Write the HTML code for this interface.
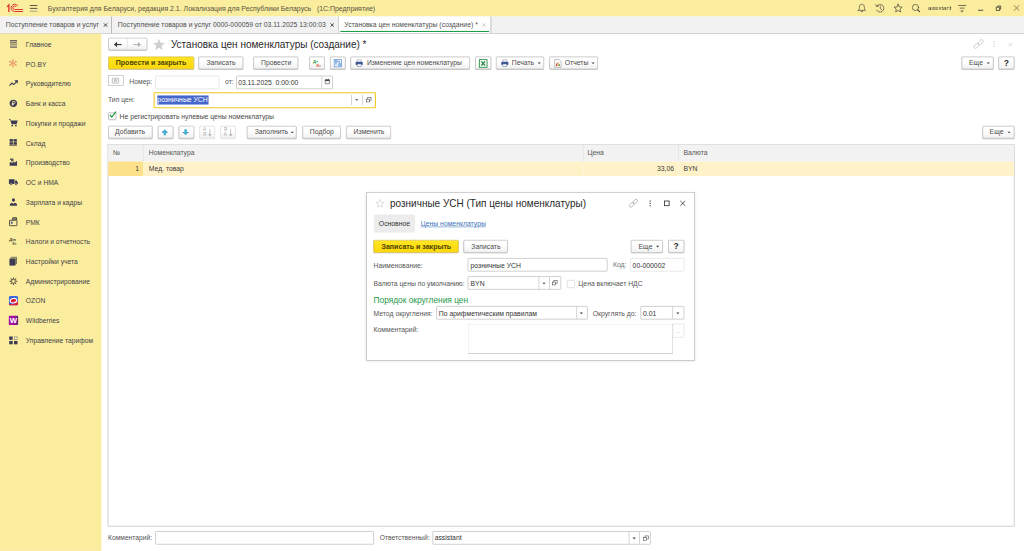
<!DOCTYPE html>
<html lang="ru">
<head>
<meta charset="utf-8">
<title>Установка цен номенклатуры (создание) *</title>
<style>
html,body{margin:0;padding:0;background:#fff;overflow:hidden;width:1024px;height:551px}
#app{position:absolute;left:0;top:0;width:1920px;height:1033px;transform:scale(0.533333);transform-origin:0 0;font-family:"Liberation Sans",sans-serif;font-size:12.8px;color:#3a3a3a;background:#fff;overflow:hidden}
#app *{box-sizing:border-box}
.t{position:absolute;white-space:pre;line-height:16px;height:16px}
svg{position:absolute;overflow:visible}
#topbar{position:absolute;left:0;top:0;width:1920px;height:31px;background:#fbed9e}
#tabbar{position:absolute;left:0;top:31px;width:1920px;height:32px;background:#f2f2f2;border-bottom:1px solid #b4b4b4}
.tab{position:absolute;top:0;height:31px;border-right:1px solid #8c8c8c}
.tab .t{top:8px;color:#4e4e4e}
#side{position:absolute;left:0;top:63px;width:190px;height:970px;background:#fbed9e}
.si{position:absolute;left:0;width:190px;height:37px}
.si span{position:absolute;left:48.5px;top:11.5px;line-height:16px;white-space:pre;color:#3f3f48;font-size:12.6px}
.si svg{left:17px;top:10.5px;width:16px;height:16px}
.btn{position:absolute;height:24px;border:1px solid #a9a9a9;border-radius:2px;background:linear-gradient(#ffffff 40%,#f0f0f0);box-shadow:0 1px 1px rgba(0,0,0,.3),inset 0 0 0 0.5px rgba(0,0,0,.08);white-space:pre;color:#4a4a4a}
.btn .t{top:3.5px}
.btn.def{background:linear-gradient(#ffe521,#fbd80b);border-color:#cfa900;font-weight:bold;color:#4d4200;font-size:13.2px}
.btn.dis{border-color:#d2d2d2;box-shadow:0 1px 1px rgba(0,0,0,.1)}
.btn .q{left:0;width:28px;text-align:center;font-weight:bold;font-size:16px;color:#2a2a2a;top:3px}
.inp{position:absolute;height:25px;border:1px solid #a8a8a8;border-radius:2px;background:#fff;white-space:pre;color:#333}
.inp.lt{border-color:#d6d6d6}
.inp .t{top:4px;left:4px}
.dv{position:absolute;top:0;width:1px;height:100%;background:#b0b0b0}
.lbl{color:#555}
.arr{position:absolute;width:0;height:0;border-left:3px solid transparent;border-right:3px solid transparent;border-top:3.5px solid #3a3a3a}
</style>
</head>
<body>
<div id="app">
<div id="topbar">
<svg style="left:0;top:0;width:80px;height:31px" viewBox="0 0 80 31">
<g fill="none" stroke="#dc2f33" stroke-width="1.8">
<path d="M13.400 12.800 L16.600 9.200 L16.600 22.300" stroke-width="2.500"/>
<path d="M33.600 11.400 A6.900 6.800 0 1 0 27.300 21.600 L43 21.600"/>
<path d="M30.600 13.200 A3.400 3.300 0 1 0 27.300 17.900 L43 17.900"/>
</g>
<g fill="#5a5748"><rect x="56" y="9.4" width="14" height="1.9"/><rect x="56" y="14.8" width="14" height="1.9"/><rect x="56" y="20.1" width="14" height="1.9" fill="#a9a57c"/></g>
</svg>
<div class="t" style="left:89.500px;top:7.500px;color:#56523f;font-size:13.020px">Бухгалтерия для Беларуси, редакция 2.1. Локализация для Республики Беларусь   (1С:Предприятие)</div>
<svg style="left:1600px;top:0;width:320px;height:31px" viewBox="1600 0 320 31">
<g fill="none" stroke="#4a4738" stroke-width="1.350" stroke-linejoin="round" stroke-linecap="round">
<!-- bell -->
<path d="M1609.5 19.5 L1622.5 19.5 C1620.5 17.5 1620.8 15 1620.6 12.8 C1620.3 9.6 1618.5 8 1616 8 C1613.5 8 1611.7 9.6 1611.4 12.8 C1611.2 15 1611.5 17.5 1609.5 19.5 Z"/>
<path d="M1614.3 21.6 Q1616 23.6 1617.7 21.6"/>
<!-- history -->
<path d="M1644.2 11.2 A7.2 7.2 0 1 1 1643.6 18.8"/>
<path d="M1642.2 8.6 L1643.6 12.4 L1647.3 11.3" />
<path d="M1650.5 11.4 L1650.5 15.8 L1653.6 18.4"/>
<!-- star -->
<path d="M1684.0 7.9 L1686.2 12.9 L1691.6 13.4 L1687.5 17.0 L1688.7 22.4 L1684.0 19.6 L1679.3 22.4 L1680.5 17.0 L1676.4 13.4 L1681.8 12.9 Z"/>
<!-- search -->
<circle cx="1716.500" cy="14" r="5.800"/>
<path d="M1720.800 18.400 L1724.300 22" stroke-width="2.100"/>
<!-- settings lines -->
<path d="M1796.500 10.200 L1811.500 10.200 M1799.500 15.200 L1808.500 15.200" stroke-width="1.450" stroke-linecap="butt"/>
<path d="M1801.800 20 L1806.200 20 L1804 22.600 Z" fill="#4a4738" stroke-width="0.6"/>
<!-- min -->
<path d="M1834 19.300 L1843.500 19.300" stroke-width="1.800" stroke-linecap="butt"/>
<!-- restore -->
<path d="M1868.700 13.400 L1874.300 13.400 L1874.300 19.700 L1868.700 19.700 Z M1870.800 13 L1870.800 11.200 L1876.300 11.200 L1876.300 17 L1874.600 17" stroke-width="1.600" stroke-linejoin="miter"/>
<!-- close -->
<path d="M1901.600 10.400 L1910.600 19.600 M1910.600 10.400 L1901.600 19.600" stroke-width="1.350" stroke="#6b5f3a"/>
</g>
</svg>
<div class="t" style="left:1739.500px;top:8px;font-size:11.100px;color:#1e1e1e;line-height:14px;height:14px;will-change:transform">assistant</div>
</div>
<div id="tabbar">
<div class="tab" style="left:0;width:209.500px"><div class="t" style="left:11px">Поступление товаров и услуг</div><svg style="left:194px;top:12px;width:8px;height:8px" viewBox="0 0 8 8"><path d="M0.800 0.800 L7 7 M7 0.800 L0.800 7" stroke="#333" stroke-width="1.700" fill="none"/></svg></div>
<div class="tab" style="left:209.500px;width:425.500px"><div class="t" style="left:11.500px">Поступление товаров и услуг 0000-000059 от 03.11.2025 13:00:03</div><svg style="left:409px;top:12px;width:8px;height:8px" viewBox="0 0 8 8"><path d="M0.800 0.800 L7 7 M7 0.800 L0.800 7" stroke="#333" stroke-width="1.700" fill="none"/></svg></div>
<div class="tab" style="left:635px;width:285.500px;background:#fff;height:31px"><div class="t" style="left:10.500px">Установка цен номенклатуры (создание) *</div><svg style="left:269px;top:12px;width:8px;height:8px" viewBox="0 0 8 8"><path d="M0.500 0.500 L7.300 7.300 M7.300 0.500 L0.500 7.300" stroke="#b5b5b5" stroke-width="1.200" fill="none"/></svg>
<div style="position:absolute;left:3px;top:27px;width:278.500px;height:2px;background:#1e9e4a"></div></div>
</div>
<div id="side">
<div class="si" style="top:1px"><svg viewBox="0 0 16 16"><rect x="1.700" y="0.400" width="13.200" height="2.100" fill="#4a4350"/><rect x="1.700" y="4.300" width="13.200" height="2" fill="#554f52"/><rect x="1.700" y="8.100" width="13.200" height="2" fill="#7d7866"/><rect x="1.700" y="11.800" width="13.200" height="3.200" fill="#8a8570"/></svg><span>Главное</span></div>
<div class="si" style="top:38px"><svg viewBox="0 0 16 16"><g stroke="#de6a48" stroke-width="1.200" fill="none"><path d="M7.300 0.600 L7.300 12.800 M2 3.600 L12.600 9.800 M2 9.800 L12.600 3.600"/></g><g fill="#d8402f"><circle cx="7.300" cy="0.400" r="1"/><circle cx="7.300" cy="13" r="1"/><circle cx="1.600" cy="3.400" r="1.100"/><circle cx="13" cy="10" r="1.100"/><circle cx="1.600" cy="10" r="1.100"/><circle cx="13" cy="3.400" r="1.100"/><circle cx="5" cy="6.700" r="0.900"/><circle cx="9.600" cy="6.700" r="0.900"/></g><circle cx="7.300" cy="6.700" r="1.300" fill="#f3c98a"/></svg><span>PO.BY</span></div>
<div class="si" style="top:75px"><svg viewBox="0 0 16 16"><path d="M0.800 11.500 L5.500 6.800 L8.800 9.600 L13.500 4.800" fill="none" stroke="#3c3a55" stroke-width="2.100"/><path d="M9.800 1.800 L16.500 1.200 L16 8 Z" fill="#3c3a55"/></svg><span>Руководителю</span></div>
<div class="si" style="top:112px"><svg viewBox="0 0 16 16"><circle cx="8.100" cy="7.700" r="6.900" fill="#3c3a55"/><path d="M6.600 12 L6.600 4 L9.300 4 A2.100 2.100 0 0 1 9.300 8.200 L5 8.200 M5 10.200 L9.300 10.200" fill="none" stroke="#f5e6a8" stroke-width="1.500"/></svg><span>Банк и касса</span></div>
<div class="si" style="top:149px"><svg viewBox="0 0 16 16"><path d="M-0.300 0.700 L2.800 0.700 L3.800 3 L16.300 3 L14 9.800 L4.800 9.800 L2.200 2 L-0.300 2 Z" fill="#3c3a55"/><circle cx="5.800" cy="12.400" r="1.600" fill="#3c3a55"/><circle cx="12.800" cy="12.400" r="1.600" fill="#3c3a55"/></svg><span>Покупки и продажи</span></div>
<div class="si" style="top:186px"><svg viewBox="0 0 16 16"><g fill="#3c3a55"><rect x="1" y="0.800" width="6.200" height="4.800"/><rect x="8.400" y="0.800" width="6.200" height="4.800"/><rect x="1" y="6.600" width="6.200" height="4.800"/><rect x="8.400" y="6.600" width="6.200" height="4.800"/></g><rect x="0.300" y="12.500" width="14.800" height="1.300" fill="#5a5650"/></svg><span>Склад</span></div>
<div class="si" style="top:223px"><svg viewBox="0 0 16 16"><path d="M1.200 14 L1.200 7 L5 7 L5 9 L9.500 5.500 L9.500 8.500 L14.900 4.500 L14.900 14 Z" fill="#3c3a55"/><rect x="1.800" y="0.400" width="6.400" height="2.300" fill="#3c3a55"/><rect x="3.800" y="3.200" width="4.200" height="2.200" fill="#3c3a55"/></svg><span>Производство</span></div>
<div class="si" style="top:260px"><svg viewBox="0 0 16 16"><path d="M-0.300 2.200 L10.300 2.200 L10.300 11 L-0.300 11 Z M11.300 4.500 L14 4.500 L16.500 8 L16.500 11 L11.300 11 Z" fill="#3c3a55"/><circle cx="3.800" cy="11.300" r="1.900" fill="#3c3a55" stroke="#fbed9e" stroke-width="0.700"/><circle cx="13" cy="11.300" r="1.900" fill="#3c3a55" stroke="#fbed9e" stroke-width="0.700"/></svg><span>ОС и НМА</span></div>
<div class="si" style="top:297px"><svg viewBox="0 0 16 16"><ellipse cx="8.200" cy="4" rx="2.900" ry="3.300" fill="#3c3a55"/><path d="M1.600 14.800 L1.600 13 Q1.600 10 5.500 9.200 L8.200 11 L11 9.200 Q14.900 10 14.900 13 L14.900 14.800 Z" fill="#3c3a55"/></svg><span>Зарплата и кадры</span></div>
<div class="si" style="top:334px"><svg viewBox="0 0 16 16"><g fill="none" stroke="#4a4538" stroke-width="1.700"><rect x="0.900" y="5" width="13.800" height="10.200" rx="0.500"/><path d="M6.800 4.500 L6.800 0.200 L14 0.200 L14 4.500"/></g><rect x="7" y="1.500" width="7" height="2.300" fill="#3c3a55"/><rect x="3.300" y="7.500" width="3.600" height="4" fill="#54609a"/></svg><span>РМК</span></div>
<div class="si" style="top:371px"><svg viewBox="0 0 16 16"><text x="0.300" y="7" font-size="7.800" font-weight="bold" font-style="italic" fill="#4a4538" font-family="Liberation Sans,sans-serif">Дт</text><text x="6.300" y="14" font-size="6.800" font-weight="bold" fill="#4a4538" font-family="Liberation Sans,sans-serif">Кт</text></svg><span>Налоги и отчетность</span></div>
<div class="si" style="top:408px"><svg viewBox="0 0 16 16"><path d="M0.700 3.500 L4 -0.500 L14.700 -0.500 L11.500 3.500 Z" fill="#8f8a6c"/><path d="M11.500 3.500 L14.700 -0.500 L14.700 12 L11.500 16 Z" fill="#6f6b5c"/><rect x="0.700" y="3.500" width="10.800" height="12.500" fill="#3c3a55"/></svg><span>Настройки учета</span></div>
<div class="si" style="top:445px"><svg viewBox="0 0 16 16"><circle cx="8.150" cy="8.350" r="3.700" fill="none" stroke="#4a4538" stroke-width="1.600"/><g stroke="#4a4538" stroke-width="1.900"><path d="M8.150 1.100 L8.150 4 M8.150 12.700 L8.150 15.600 M0.900 8.350 L3.800 8.350 M12.500 8.350 L15.400 8.350 M3 3.200 L5.050 5.250 M11.250 11.450 L13.300 13.500 M13.300 3.200 L11.250 5.250 M5.050 11.450 L3 13.500"/></g></svg><span>Администрирование</span></div>
<div class="si" style="top:482px"><svg viewBox="0 0 16 16"><clipPath id="oz"><rect x="-0.500" y="-1.200" width="17.500" height="18" rx="3.500"/></clipPath><g clip-path="url(#oz)"><rect x="-0.500" y="-1.200" width="17.500" height="18" fill="#3561dd"/><path d="M-0.500 13 Q9 17 17 8.500 L17 17 L-0.500 17 Z" fill="#e0203a"/></g><ellipse cx="8.300" cy="7.800" rx="6.300" ry="4.100" fill="#df1f38" stroke="#fff" stroke-width="2" transform="rotate(-12 8.300 7.800)"/></svg><span>OZON</span></div>
<div class="si" style="top:519px"><svg viewBox="0 0 16 16"><linearGradient id="wbg" x1="0" x2="1" y1="0" y2="0"><stop offset="0.650" stop-color="#a3109f"/><stop offset="1" stop-color="#4a2a78"/></linearGradient><rect x="-0.500" y="-0.800" width="17.500" height="17.200" rx="1.500" fill="url(#wbg)"/><text x="8.300" y="13" font-size="14.500" font-weight="bold" fill="#fff" text-anchor="middle" font-family="Liberation Sans,sans-serif">W</text></svg><span>Wildberries</span></div>
<div class="si" style="top:556px"><svg viewBox="0 0 16 16"><g fill="#3c3a55"><rect x="0.300" y="0.900" width="6.500" height="6.300"/><rect x="0.300" y="9.300" width="6.500" height="6.300"/><rect x="9.300" y="9.300" width="6.500" height="6.300"/></g><rect x="10" y="1.600" width="5.100" height="4.900" fill="#fdf6cf" stroke="#8c8770" stroke-width="1.300"/></svg><span>Управление тарифом</span></div>
</div>
<div id="main">
<!-- nav -->
<div class="btn" style="left:202.800px;top:71.400px;width:72.800px;height:22.900px;box-shadow:0 1px 1px rgba(0,0,0,.3)"><div class="dv" style="left:33.800px;background:#d4d4d4"></div>
<svg style="left:9.500px;top:5.300px;width:16px;height:11px" viewBox="0 0 16 11"><path d="M15 5.500 L3 5.500" stroke="#3a3a3a" stroke-width="2.200" fill="none"/><path d="M0.500 5.500 L6.500 0.500 L6.500 10.500 Z" fill="#3a3a3a"/></svg>
<svg style="left:45px;top:5.300px;width:16px;height:11px" viewBox="0 0 16 11"><path d="M1 5.500 L13 5.500" stroke="#b4b4b4" stroke-width="2" fill="none"/><path d="M15.500 5.500 L9.500 0.500 L9.500 10.500 Z" fill="#b4b4b4"/></svg>
</div>
<svg style="left:286px;top:71.500px;width:24px;height:22.500px" viewBox="0 0 23 21"><path d="M11.500 0.500 L14.400 7.600 L22.300 8.100 L16.200 13.100 L18.200 20.600 L11.500 16.500 L4.800 20.600 L6.800 13.100 L0.700 8.100 L8.600 7.600 Z" fill="#cfcfcf"/></svg>
<div class="t" style="left:320.500px;top:71.500px;font-size:18.740px;line-height:24px;height:24px;color:#2a2a2a">Установка цен номенклатуры (создание) *</div>
<!-- header right icons -->
<svg style="left:1824px;top:73px;width:22px;height:20px" viewBox="1824 73 22 20"><g fill="none" stroke="#c2c2c2" stroke-width="1.400"><rect x="1825.500" y="83" width="10.500" height="6" rx="3" transform="rotate(-42 1830.750 86)"/><rect x="1833.500" y="76" width="10.500" height="6" rx="3" transform="rotate(-42 1838.750 79)"/></g></svg>
<svg style="left:1860px;top:75px;width:8px;height:16px" viewBox="0 0 8 16"><g fill="#c4c4c4"><rect x="3" y="2.200" width="2" height="2"/><rect x="3" y="6.500" width="2" height="2"/><rect x="3" y="10.800" width="2" height="2"/></g></svg>
<svg style="left:1891px;top:79.500px;width:7px;height:7px" viewBox="0 0 8 8"><path d="M0.500 0.500 L7.500 7.500 M7.500 0.500 L0.500 7.500" stroke="#c4c4c4" stroke-width="1.300" fill="none"/></svg>
<!-- command bar -->
<div class="btn def" style="left:203px;top:105.500px;width:160.500px"><div class="t" style="left:13px">Провести и закрыть</div></div>
<div class="btn" style="left:372px;top:105.500px;width:83.500px"><div class="t" style="left:14px">Записать</div></div>
<div class="btn" style="left:475px;top:105.500px;width:84px"><div class="t" style="left:13.500px">Провести</div></div>
<div class="btn" style="left:579.500px;top:105.500px;width:29.500px">
<div class="t" style="left:6.500px;top:4.500px;font-size:7.800px;font-weight:bold;color:#2c9a3e;line-height:9px;height:9px">Дт</div>
<div class="t" style="left:13px;top:12px;font-size:7.500px;font-weight:bold;color:#e0452c;line-height:9px;height:9px">Кт</div></div>
<div class="btn" style="left:618.500px;top:105.500px;width:29.500px"><svg style="left:6.500px;top:4px;width:15px;height:15px" viewBox="0 0 15 15"><rect x="0.600" y="0.600" width="13.800" height="13.800" fill="#e9f1fb" stroke="#5b90d4" stroke-width="1.300"/><rect x="1.500" y="1.500" width="5" height="5.500" fill="#8db4e6"/><rect x="8" y="7.500" width="5.500" height="6" fill="#8db4e6"/><rect x="2" y="9" width="4" height="3.500" fill="#fff"/><path d="M6.500 4 L10.500 4 L10.500 7.500 M4 7 L4 11" stroke="#3f78c6" stroke-width="1.200" fill="none"/></svg></div>
<div class="btn" style="left:657px;top:105.500px;width:224px"><svg class="prn" style="left:8px;top:4.500px;width:15px;height:15px" viewBox="0 0 15 15"><path d="M3.800 5 L3.800 1.200 L11.200 1.200 L11.200 5" fill="#fff" stroke="#8e96ab" stroke-width="1.100"/><rect x="0.800" y="5" width="13.400" height="6" rx="1.500" fill="#3b5590"/><rect x="3.800" y="9" width="7.400" height="4.800" fill="#fff" stroke="#5a6a92" stroke-width="1"/></svg><div class="t" style="left:30px;font-size:12.600px">Изменение цен номенклатуры</div></div>
<div class="btn" style="left:891px;top:105.500px;width:29.500px"><svg style="left:6px;top:4px;width:16px;height:16px" viewBox="0 0 16 16"><rect x="0.800" y="0.800" width="14.400" height="14.400" fill="#fff" stroke="#1f8a43" stroke-width="1.600"/><rect x="3" y="3" width="10" height="10" fill="#e4f3e8"/><path d="M4.500 4 L11.500 12 M11.500 4 L4.500 12" stroke="#1f7a3a" stroke-width="2" fill="none"/></svg></div>
<div class="btn" style="left:930px;top:105.500px;width:90px"><svg style="left:8px;top:4.500px;width:15px;height:15px" viewBox="0 0 15 15"><path d="M3.800 5 L3.800 1.200 L11.200 1.200 L11.200 5" fill="#fff" stroke="#8e96ab" stroke-width="1.100"/><rect x="0.800" y="5" width="13.400" height="6" rx="1.500" fill="#3b5590"/><rect x="3.800" y="9" width="7.400" height="4.800" fill="#fff" stroke="#5a6a92" stroke-width="1"/></svg><div class="t" style="left:28.500px">Печать</div><div class="arr" style="left:76.500px;top:10.800px"></div></div>
<div class="btn" style="left:1029.500px;top:105.500px;width:91.500px"><svg style="left:8px;top:4px;width:14px;height:16px" viewBox="0 0 14 16"><path d="M1 0.700 L9.500 0.700 L13 4.200 L13 15.300 L1 15.300 Z" fill="#fff" stroke="#9a9a9a" stroke-width="1.200"/><rect x="3.500" y="8" width="2" height="5" fill="#d23c2c"/><rect x="6.300" y="5.500" width="2" height="7.500" fill="#e0812c"/><rect x="9" y="9.500" width="1.800" height="3.500" fill="#3a9a3e"/></svg><div class="t" style="left:28.500px">Отчеты</div><div class="arr" style="left:78px;top:10.800px"></div></div>
<div class="btn" style="left:1802.500px;top:105.500px;width:60.500px"><div class="t" style="left:13.500px">Еще</div><div class="arr" style="left:46.500px;top:10.800px"></div></div>
<div class="btn" style="left:1872px;top:105.500px;width:30px"><div class="t q">?</div></div>
<!-- number row -->
<div style="position:absolute;left:202.500px;top:141px;width:29.500px;height:20px;border:1px solid #a9a9a9;background:#fff"><svg style="left:6.300px;top:3.800px;width:13px;height:10.500px" viewBox="0 0 13 10.500"><rect x="0.600" y="0.600" width="11.800" height="9.300" rx="1" fill="#f6f6f6" stroke="#a2a2a2" stroke-width="1.200"/><rect x="3.800" y="2.300" width="5.400" height="5.600" fill="#c9c9c9"/></svg></div>
<div class="t lbl" style="left:242.500px;top:145.500px">Номер:</div>
<div class="inp lt" style="left:291px;top:141.500px;width:119.500px"></div>
<div class="t lbl" style="left:422px;top:145.500px">от:</div>
<div class="inp" style="left:442.500px;top:141.500px;width:181.500px"><div class="t" style="left:3px">03.11.2025  0:00:00</div><div class="dv" style="left:159.500px"></div>
<svg style="left:165px;top:5.500px;width:9.500px;height:9.500px" viewBox="0 0 11 11"><rect x="0.700" y="1.700" width="9.600" height="8.600" rx="1" fill="#fff" stroke="#444" stroke-width="1.300"/><rect x="0.700" y="1.700" width="9.600" height="3" fill="#444"/><rect x="2.500" y="0" width="1.500" height="2.500" fill="#444"/><rect x="7" y="0" width="1.500" height="2.500" fill="#444"/></svg></div>
<!-- price type row -->
<div class="t lbl" style="left:202.500px;top:180px">Тип цен:</div>
<div class="inp" style="left:288px;top:172.500px;width:417px;height:30.500px;border:2.500px solid #f6c822;border-radius:1.500px">
<div style="position:absolute;left:5px;top:4.500px;width:95.500px;height:16.500px;background:#4566cb"></div>
<div class="t" style="left:5px;top:4.500px;color:#fff">розничные УСН</div>
<div class="dv" style="left:368.500px;top:3px;height:19.500px"></div><div class="dv" style="left:389px;top:3px;height:19.500px"></div>
<div class="arr" style="left:375.500px;top:11px"></div>
<svg style="left:395.500px;top:7px;width:10.500px;height:10.500px" viewBox="0 0 12 12"><g fill="#fff" stroke="#444" stroke-width="1.200"><rect x="4" y="1" width="7" height="6.500"/><rect x="1" y="4.500" width="6.500" height="6"/></g></svg>
</div>
<!-- checkbox -->
<div style="position:absolute;left:203px;top:211px;width:14.500px;height:14px;border:1px solid #8c8c8c;border-radius:2px;background:#fff"></div>
<svg style="left:204px;top:207px;width:16px;height:16px" viewBox="0 0 16 16"><path d="M2 8.500 L5.500 12.500 L13.500 2.500" fill="none" stroke="#1c9440" stroke-width="2.300"/></svg>
<div class="t" style="left:224.200px;top:210.500px;font-size:12.750px;color:#484848">Не регистрировать нулевые цены номенклатуры</div>
<!-- table cmd bar -->
<div class="btn" style="left:203px;top:235.500px;width:82.500px"><div class="t" style="left:11.500px">Добавить</div></div>
<div class="btn" style="left:295.500px;top:235.500px;width:29px"><svg style="left:6.800px;top:5.500px;width:12px;height:12px" viewBox="0 0 14 14"><path d="M7 0.300 L13.700 7.500 L9.600 7.500 L9.600 13.700 L4.400 13.700 L4.400 7.500 L0.300 7.500 Z" fill="#3fb0cb"/><path d="M0.300 7.500 L2.600 5 L3.600 7.500 Z M13.700 7.500 L11.400 5 L10.400 7.500 Z" fill="#3f5fd0"/></svg></div>
<div class="btn" style="left:334.500px;top:235.500px;width:29px"><svg style="left:6.800px;top:5.500px;width:12px;height:12px" viewBox="0 0 14 14"><path d="M7 13.700 L13.700 6.500 L9.600 6.500 L9.600 0.300 L4.400 0.300 L4.400 6.500 L0.300 6.500 Z" fill="#3fb0cb"/><path d="M0.300 6.500 L2.600 9 L3.600 6.500 Z M13.700 6.500 L11.400 9 L10.400 6.500 Z" fill="#3f5fd0"/></svg></div>
<div class="btn dis" style="left:373.500px;top:235.500px;width:29.500px"><div class="t" style="left:6px;top:2.500px;font-size:8.500px;line-height:8px;height:8px;color:#a6a6a6">А</div><div class="t" style="left:6px;top:11.500px;font-size:8.500px;line-height:8px;height:8px;color:#a6a6a6">Я</div><svg style="left:14px;top:4px;width:9px;height:16px" viewBox="0 0 9 16"><path d="M4.500 1 L4.500 13" stroke="#b0b0b0" stroke-width="1.400"/><path d="M1 10.500 L4.500 15 L8 10.500 Z" fill="#b0b0b0"/></svg></div>
<div class="btn dis" style="left:412.500px;top:235.500px;width:29.500px"><div class="t" style="left:6px;top:2.500px;font-size:8.500px;line-height:8px;height:8px;color:#a6a6a6">Я</div><div class="t" style="left:6px;top:11.500px;font-size:8.500px;line-height:8px;height:8px;color:#a6a6a6">А</div><svg style="left:14px;top:4px;width:9px;height:16px" viewBox="0 0 9 16"><path d="M4.500 1 L4.500 13" stroke="#b0b0b0" stroke-width="1.400"/><path d="M1 10.500 L4.500 15 L8 10.500 Z" fill="#b0b0b0"/></svg></div>
<div class="btn" style="left:462.500px;top:235.500px;width:93.500px"><div class="t" style="left:14px">Заполнить</div><div class="arr" style="left:81.500px;top:10.800px"></div></div>
<div class="btn" style="left:566.500px;top:235.500px;width:72px"><div class="t" style="left:13.500px">Подбор</div></div>
<div class="btn" style="left:648.500px;top:235.500px;width:84.500px"><div class="t" style="left:13.500px">Изменить</div></div>
<div class="btn" style="left:1841.500px;top:235.500px;width:60.500px"><div class="t" style="left:13px">Еще</div><div class="arr" style="left:46.500px;top:10.800px"></div></div>
<!-- table -->
<div style="position:absolute;left:202.400px;top:270.300px;width:1700px;height:716.600px;border:1px solid #a8a8a8;background:#fff">
<div style="position:absolute;left:0;top:0;width:100%;height:32px;background:#f2f2f2"></div>
<div class="dv" style="left:64.500px;height:32px;background:#dcdcdc"></div><div class="dv" style="left:889.700px;height:32px;background:#dcdcdc"></div><div class="dv" style="left:1068.200px;height:32px;background:#dcdcdc"></div>
<div class="t lbl" style="left:8.500px;top:7.500px">№</div><div class="t lbl" style="left:75.500px;top:7.500px">Номенклатура</div><div class="t lbl" style="left:898px;top:7.500px">Цена</div><div class="t lbl" style="left:1078px;top:7.500px">Валюта</div>
<div style="position:absolute;left:0;top:32px;width:100%;height:26.500px;background:#fff2c9"></div>
<div style="position:absolute;left:0;top:32px;width:64.500px;height:26.500px;background:#fde18a"></div>
<div style="position:absolute;left:889.700px;top:32px;width:0;height:26.500px;border-left:1px dashed #fff"></div><div style="position:absolute;left:1068.200px;top:32px;width:0;height:26.500px;border-left:1px dashed #fff"></div>
<div class="t" style="left:0;top:37px;width:57.500px;text-align:right">1</div><div class="t" style="left:75.500px;top:37px">Мед. товар</div><div class="t" style="left:960px;top:37px;width:100.500px;text-align:right">33,06</div><div class="t" style="left:1078px;top:37px">BYN</div>
</div>
<!-- footer -->
<div class="t lbl" style="left:202.500px;top:1001px;font-size:12.600px">Комментарий:</div>
<div class="inp" style="left:291px;top:996px;width:409.500px"></div>
<div class="t lbl" style="left:712px;top:1000.500px;font-size:12.600px">Ответственный:</div>
<div class="inp" style="left:810.500px;top:996px;width:409.500px"><div class="t" style="left:3.500px">assistant</div><div class="dv" style="left:367px"></div><div class="dv" style="left:387.500px"></div><div class="arr" style="left:374.500px;top:10.500px"></div>
<svg style="left:394.500px;top:6.500px;width:10.500px;height:10.500px" viewBox="0 0 12 12"><g fill="#fff" stroke="#444" stroke-width="1.200"><rect x="4" y="1" width="7" height="6.500"/><rect x="1" y="4.500" width="6.500" height="6"/></g></svg></div>
</div>
<div id="dlg" style="position:absolute;left:687px;top:360.200px;width:616px;height:315.700px;background:#fff;box-shadow:inset 0 0 0 1px #a3a3a3,0 1px 5px rgba(0,0,0,.13)">
<div style="position:absolute;left:0.300px;top:2.300px;width:0;height:0">
<svg style="left:16.500px;top:11px;width:17px;height:16px" viewBox="0 0 18 17"><path d="M9 1 L11.300 6.500 L17.200 6.900 L12.700 10.800 L14.100 16.500 L9 13.400 L3.900 16.500 L5.300 10.800 L0.800 6.900 L6.700 6.500 Z" fill="none" stroke="#c9c9c9" stroke-width="1.200" stroke-linejoin="round"/></svg>
<div class="t" style="left:44px;top:7.500px;font-size:18.730px;line-height:24px;height:24px;color:#2a2a2a">розничные УСН (Тип цены номенклатуры)</div>
<svg style="left:491px;top:9.500px;width:20px;height:18px" viewBox="0 0 20 18"><g fill="none" stroke="#a4a4a4" stroke-width="1.300"><rect x="1.500" y="9.500" width="9.500" height="5.500" rx="2.750" transform="rotate(-42 6.250 12.250)"/><rect x="8.500" y="3" width="9.500" height="5.500" rx="2.750" transform="rotate(-42 13.250 5.750)"/></g></svg>
<svg style="left:528px;top:11.500px;width:8px;height:16px" viewBox="0 0 8 16"><g fill="#444"><rect x="3" y="2" width="2.200" height="2.200"/><rect x="3" y="6.300" width="2.200" height="2.200"/><rect x="3" y="10.600" width="2.200" height="2.200"/></g></svg>
<svg style="left:558px;top:13.500px;width:10.500px;height:10.500px" viewBox="0 0 12 12"><rect x="1" y="1" width="10" height="10" fill="none" stroke="#333" stroke-width="1.800"/></svg>
<svg style="left:588px;top:13.500px;width:10.500px;height:10.500px" viewBox="0 0 12 12"><path d="M0.800 0.800 L11.200 11.200 M11.200 0.800 L0.800 11.200" stroke="#333" stroke-width="1.700" fill="none"/></svg>
<!-- nav tabs -->
<div style="position:absolute;left:13.500px;top:40px;width:77px;height:34px;background:#ececec;border-radius:3px"></div>
<div class="t" style="left:23px;top:50px;color:#333">Основное</div>
<div class="t" style="left:101.500px;top:50px;color:#3d74b8;text-decoration:underline">Цены номенклатуры</div>
<!-- cmd -->
<div class="btn def" style="left:13px;top:87.200px;width:160px"><div class="t" style="left:14px">Записать и закрыть</div></div>
<div class="btn" style="left:182px;top:87.200px;width:82.500px"><div class="t" style="left:13.500px">Записать</div></div>
<div class="btn" style="left:495.500px;top:87.200px;width:60.500px"><div class="t" style="left:13.500px">Еще</div><div class="arr" style="left:46.500px;top:10.800px"></div></div>
<div class="btn" style="left:565.500px;top:87.200px;width:30px"><div class="t q">?</div></div>
<!-- name -->
<div class="t lbl" style="left:13px;top:127.500px">Наименование:</div>
<div class="inp" style="left:190px;top:121.900px;width:262px"><div class="t" style="top:5px">розничные УСН</div></div>
<div class="t" style="left:462px;top:127px;color:#777">Код:</div>
<div class="inp lt" style="left:494.300px;top:121.900px;width:101.300px"><div class="t" style="left:3.500px;top:5px">00-000002</div></div>
<!-- currency -->
<div class="t lbl" style="left:13px;top:162.300px">Валюта цены по умолчанию:</div>
<div class="inp" style="left:190px;top:155.500px;width:174.300px"><div class="t" style="top:5.500px">BYN</div><div class="dv" style="left:131.500px"></div><div class="dv" style="left:151.500px"></div><div class="arr" style="left:138.600px;top:10.800px"></div>
<svg style="left:157px;top:6.500px;width:10.500px;height:10.500px" viewBox="0 0 12 12"><g fill="#fff" stroke="#444" stroke-width="1.200"><rect x="4" y="1" width="7" height="6.500"/><rect x="1" y="4.500" width="6.500" height="6"/></g></svg></div>
<div style="position:absolute;left:375.600px;top:162.600px;width:15.500px;height:14.500px;border:1px solid #c6c6c6;border-radius:3px;background:#fff"></div>
<div class="t lbl" style="left:397px;top:162px">Цена включает НДС</div>
<!-- rounding group -->
<div class="t" style="left:13px;top:190.500px;font-size:15.650px;line-height:20px;height:20px;color:#1f9a4c">Порядок округления цен</div>
<div class="t lbl" style="left:13px;top:217.500px">Метод округления:</div>
<div class="inp" style="left:130.500px;top:212px;width:284px"><div class="t" style="top:5.500px">По арифметическим правилам</div><div class="dv" style="left:262px"></div><div class="arr" style="left:268.500px;top:10.800px"></div></div>
<div class="t lbl" style="left:424px;top:217.500px">Округлять до:</div>
<div class="inp" style="left:513.300px;top:212px;width:82.300px"><div class="t" style="top:5.500px">0.01</div><div class="dv" style="left:59.500px"></div><div class="arr" style="left:66px;top:10.800px"></div></div>
<!-- comment -->
<div class="t lbl" style="left:13px;top:248px">Комментарий:</div>
<div class="inp" style="left:190px;top:245px;width:384.500px;height:57px;border-top-color:#b5b5b5"></div>
<div class="inp lt" style="left:573.500px;top:245px;width:22px;height:25.500px"><div class="t" style="left:0;top:5px;width:20px;text-align:center;color:#aaa;font-size:10px">...</div></div>
</div>
</div>
</div>
</body>
</html>
